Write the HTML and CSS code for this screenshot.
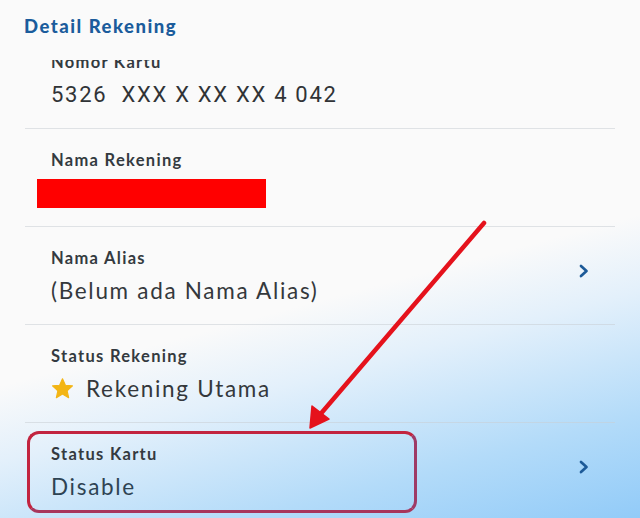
FILE: index.html
```html
<!DOCTYPE html>
<html lang="id">
<head>
<meta charset="utf-8">
<title>Detail Rekening</title>
<link rel="stylesheet" href="styles.css">
</head>
<body>
<div class="screen">
  <h1 class="title">Detail Rekening</h1>
  <div class="viewport">
    <div class="list">
      <div class="row">
        <div class="info">
          <div class="label">Nomor Kartu</div>
          <div class="value mono">5326&nbsp; XXX X XX XX 4 042</div>
        </div>
      </div>
      <div class="row">
        <div class="info">
          <div class="label">Nama Rekening</div>
          <div class="redact"></div>
        </div>
      </div>
      <div class="row">
        <div class="info">
          <div class="label">Nama Alias</div>
          <div class="value">(Belum ada Nama Alias)</div>
        </div>
        <svg class="chev" viewBox="0 0 10 14" width="10" height="14"><path d="M2 2 L7.5 7 L2 12" fill="none" stroke="#1d5a98" stroke-width="2.7" stroke-linecap="round" stroke-linejoin="round"/></svg>
      </div>
      <div class="row">
        <div class="info">
          <div class="label">Status Rekening</div>
          <div class="value star-line"><svg class="star" viewBox="0 0 24 24" width="23" height="23"><path d="M12 1.8 L15 8.6 L22.4 9.3 L16.8 14.3 L18.4 21.6 L12 17.8 L5.6 21.6 L7.2 14.3 L1.6 9.3 L9 8.6 Z" fill="#f3b515" stroke="#f3b515" stroke-width="1.2" stroke-linejoin="round"/></svg>Rekening Utama</div>
        </div>
      </div>
      <div class="row last">
        <div class="info">
          <div class="label">Status Kartu</div>
          <div class="value dark">Disable</div>
        </div>
        <svg class="chev" viewBox="0 0 10 14" width="10" height="14"><path d="M2 2 L7.5 7 L2 12" fill="none" stroke="#1d5a98" stroke-width="2.7" stroke-linecap="round" stroke-linejoin="round"/></svg>
      </div>
    </div>
  </div>
  <div class="highlight"></div>
  <svg class="arrow" viewBox="0 0 640 518" width="640" height="518">
    <line x1="484" y1="223" x2="318" y2="417" stroke="#e5121c" stroke-width="4.5" stroke-linecap="round"/>
    <path d="M310 428 L312 406 L329 419 Z" fill="#e5121c" stroke="#e5121c" stroke-width="1.5" stroke-linejoin="round"/>
  </svg>
</div>
</body>
</html>
```
FILE: styles.css
```css
* { box-sizing: border-box; }
html, body { margin: 0; padding: 0; }
body {
  width: 640px;
  height: 518px;
  overflow: hidden;
  font-family: Lato, "Open Sans", sans-serif;
}
.screen {
  position: relative;
  width: 640px;
  height: 518px;
  background: linear-gradient(165deg, #fafafa 0%, #fafafa 56%, #e3f0fb 67%, #b3dbf9 85%, #92cbf8 100%);
  display: flex;
  flex-direction: column;
}
.title {
  margin: 0;
  padding: 14px 0 0 24px;
  height: 60px;
  font-size: 18.5px;
  font-weight: 900;
  color: #1b5c9c;
  line-height: 24px;
  letter-spacing: 1.5px;
}
.viewport {
  flex: 1;
  overflow: hidden;
  padding: 0 25px;
}
.list {
  margin-top: -29px;
}
.row {
  height: 98px;
  border-bottom: 1px solid rgba(200, 205, 212, 0.55);
  display: flex;
  align-items: flex-start;
  padding: 0 26px 0 26px;
}
.row.last { border-bottom: none; }
.info { flex: 1; }
.label {
  margin-top: 21px;
  font-size: 16.5px;
  line-height: 20px;
  font-weight: 700;
  color: #343a40;
  letter-spacing: 1.3px;
}
.value {
  margin-top: 8px;
  font-size: 22.5px;
  line-height: 30px;
  color: #34383c;
  letter-spacing: 1.7px;
}
.value.mono {
  font-family: Roboto, "Liberation Sans", sans-serif;
  font-size: 22px;
  letter-spacing: 1.7px;
  color: #303336;
}
.value.dark { color: #2e4353; }
.redact {
  margin: 9px 0 0 -14px;
  width: 229px;
  height: 29px;
  background: #ff0000;
}
.star-line {
  display: flex;
  align-items: center;
  gap: 12px;
}
.star { flex: none; margin-top: -1px; }
.chev {
  flex: none;
  margin-top: 37px;
}
.highlight {
  position: absolute;
  left: 27px;
  top: 431px;
  width: 390px;
  height: 82px;
  border: 3px solid #c2243f;
  border-radius: 12px;
  border-right-color: #9e3a66;
  border-bottom-color: #a8355c;
}
.arrow {
  position: absolute;
  left: 0;
  top: 0;
  pointer-events: none;
}
```
